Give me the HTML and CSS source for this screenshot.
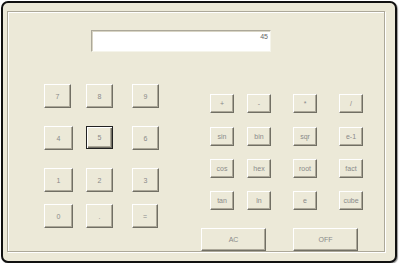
FILE: index.html
```html
<!DOCTYPE html>
<html lang="en">
<head>
  <meta charset="UTF-8" />
  <title>Calculator</title>
  <link rel="stylesheet" href="styles.css">
</head>
<body>
<div class="window">
  <div class="group">

    <!-- Display -->
    <div class="display">45</div>

    <div class="panels">

      <!-- Number pad -->
      <div class="numpad">
        <button class="key">7</button>
        <button class="key">8</button>
        <button class="key">9</button>
        <button class="key wide">4</button>
        <button class="key focus">5</button>
        <button class="key">6</button>
        <button class="key wide">1</button>
        <button class="key">2</button>
        <button class="key">3</button>
        <button class="key wide">0</button>
        <button class="key">.</button>
        <button class="key narrow">=</button>
      </div>

      <!-- Functions -->
      <div class="funcs">
        <div class="funcgrid">
          <button class="fkey">+</button>
          <button class="fkey">-</button>
          <button class="fkey">*</button>
          <button class="fkey">/</button>
          <button class="fkey">sin</button>
          <button class="fkey">bin</button>
          <button class="fkey">sqr</button>
          <button class="fkey">e-1</button>
          <button class="fkey">cos</button>
          <button class="fkey">hex</button>
          <button class="fkey">root</button>
          <button class="fkey">fact</button>
          <button class="fkey">tan</button>
          <button class="fkey">ln</button>
          <button class="fkey">e</button>
          <button class="fkey">cube</button>
        </div>
        <div class="bottomRow">
          <button class="bigkey">AC</button>
          <button class="bigkey">OFF</button>
        </div>
      </div>

    </div>
  </div>
</div>
</body>
</html>
```

FILE: styles.css
```css
html, body {
  margin: 0;
  padding: 0;
  background: #fff;
  font-family: "Liberation Sans", Arial, sans-serif;
}

/* Outer window with rounded black frame */
.window {
  margin: 1px 0 0 1px;
  width: 392px;
  height: 258px;
  border: 2px solid #111;
  border-radius: 7px;
  background: #ece9d8;
  box-shadow: 1px 1px 1px #9a9a9a;
}

/* Etched group box */
.group {
  margin: 8px 0 0 4px;
  width: 376px;
  height: 239px;
  border: 1px solid #aca899;
  box-shadow: 1px 1px 0 #fff, inset 1px 1px 0 #fff;
}

.display {
  margin: 18px 0 0 83px;
  width: 176px;
  height: 18px;
  padding: 2px 2px 0 0;
  background: #fff;
  border: 1px solid;
  border-color: #aca899 #f5f4ea #f5f4ea #aca899;
  box-shadow: inset 1px 1px 0 #d8d4c4;
  text-align: right;
  font-size: 7px;
  color: #666;
  box-sizing: content-box;
}

.panels {
  display: flex;
}

/* Buttons share the XP-classic 3D look */
button {
  margin: 0;
  padding: 0;
  font-family: "Liberation Sans", Arial, sans-serif;
  font-size: 7px;
  color: #8a8a8a;
  background: #ece9d8;
  border: 1px solid;
  border-color: #fff #716f64 #716f64 #fff;
  box-shadow: inset -1px -1px 0 #aca899;
  border-radius: 0;
  box-sizing: border-box;
  cursor: pointer;
}

.numpad {
  margin: 32px 0 0 36px;
  display: grid;
  grid-template-columns: 42px 46px 28px;
  grid-template-rows: 42px 42px 36px 24px;
  align-items: start;
}
.key {
  width: 27px;
  height: 24px;
}
.key.wide {
  width: 29px;
}
.key.narrow {
  width: 26px;
}
.key.focus {
  border: 1px solid #222;
  box-shadow: inset 1px 1px 0 #fff, inset -1px -1px 0 #716f64, inset -2px -2px 0 #aca899;
  height: 23px;
}

.funcs {
  margin: 42px 0 0 41px;
}
.funcgrid {
  padding-left: 9px;
  display: grid;
  grid-template-columns: 37px 46px 46px 24px;
  grid-template-rows: 33px 32px 32px 19px;
  align-items: start;
}
.fkey {
  width: 24px;
  height: 19px;
}

.bottomRow {
  margin-top: 18px;
  display: flex;
  gap: 27px;
}
.bigkey {
  width: 65px;
  height: 23px;
}
```
